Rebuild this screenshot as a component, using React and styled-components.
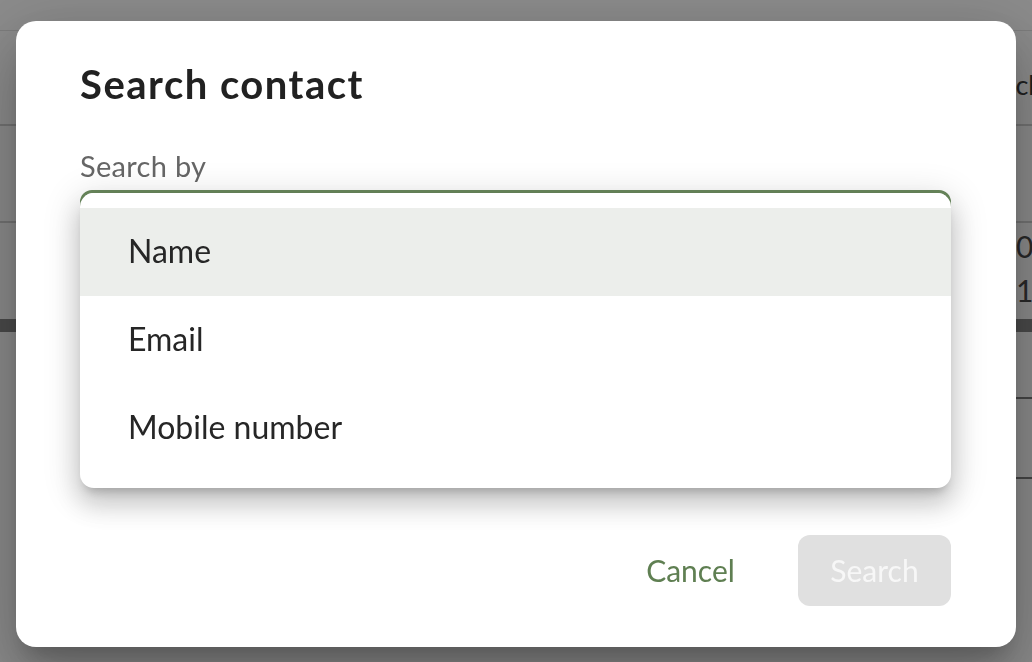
import React from "react";
import styled, { createGlobalStyle } from "styled-components";

const Global = createGlobalStyle`
  html, body { margin: 0; padding: 0; }
  body {
    width: 1032px;
    height: 662px;
    overflow: hidden;
    background: #ffffff;
    font-family: Lato, "Noto Sans", "Liberation Sans", sans-serif;
  }
`;

const Page = styled.div`
  width: 1032px;
  height: 662px;
  background: #fff;
  display: flex;
  flex-direction: column;
`;

const TopBar = styled.div`
  height: 30px;
  border-bottom: 1px solid #e4e4e4;
`;

const HeaderRow = styled.div`
  height: 95px;
  box-sizing: border-box;
  padding-top: 14px;
  border-bottom: 2px solid #d2d2d2;
  display: flex;
  align-items: center;
  justify-content: flex-end;
`;

const HeaderCell = styled.div`
  font-size: 27px;
  color: #3a3a3a;
  white-space: nowrap;
  margin-right: -10px;
`;

const Row = styled.div`
  height: ${(p) => p.$h}px;
  border-bottom: ${(p) => (p.$last ? "none" : "2px solid #d2d2d2")};
  display: flex;
  align-items: center;
  justify-content: flex-end;
`;

const StackCell = styled.div`
  display: flex;
  flex-direction: column;
  font-size: 30px;
  line-height: 44px;
  margin-top: -6px;
  color: #4a4a4a;
  margin-right: -30px;
  width: 46px;
`;

const DarkBar = styled.div`
  height: 13px;
  background: #888;
`;

const LowerRow = styled.div`
  height: ${(p) => p.$h}px;
  margin-left: 600px;
  border-bottom: 2px solid #7e7e7e;
`;

const Overlay = styled.div`
  position: fixed;
  inset: 0;
  background: rgba(0, 0, 0, 0.455);
  display: flex;
  justify-content: center;
  align-items: flex-start;
  padding-top: 21px;
  box-sizing: border-box;
`;

const Dialog = styled.div`
  position: relative;
  width: 1000px;
  height: 626px;
  box-sizing: border-box;
  background: #fff;
  border-radius: 20px;
  padding: 40px 65px 0 64px;
  display: flex;
  flex-direction: column;
  box-shadow: 0 16px 22px -10px rgba(0, 0, 0, 0.2),
    0 36px 56px 4px rgba(0, 0, 0, 0.16), 0 14px 68px 12px rgba(0, 0, 0, 0.14);
`;

const Title = styled.h2`
  margin: 0;
  font-size: 40px;
  line-height: 46px;
  letter-spacing: 1.5px;
  font-weight: 700;
  color: #212121;
`;

const Label = styled.label`
  display: block;
  margin-top: 43px;
  font-size: 29px;
  line-height: 32px;
  letter-spacing: 0.3px;
  color: #666;
`;

const Field = styled.div`
  position: relative;
  margin-top: 8px;
`;

const SelectBox = styled.div`
  height: 72px;
  box-sizing: border-box;
  border: 3px solid #6b8a5e;
  border-radius: 12px;
  background: #fff;
`;

const TextBox = styled.div`
  margin-top: 40px;
  height: 72px;
  box-sizing: border-box;
  border: 2px solid #c4c4c4;
  border-radius: 12px;
`;

const Menu = styled.ul`
  position: absolute;
  top: 3px;
  left: 0;
  right: 0;
  margin: 0;
  padding: 15px 0 16px;
  list-style: none;
  background: #fff;
  border-radius: 14px;
  box-shadow: 0 8px 10px -5px rgba(0, 0, 0, 0.2),
    0 16px 24px 2px rgba(0, 0, 0, 0.14), 0 6px 34px 6px rgba(0, 0, 0, 0.12);
  z-index: 2;
`;

const Item = styled.li`
  height: 88px;
  box-sizing: border-box;
  padding-bottom: 4px;
  display: flex;
  align-items: center;
  padding-left: 48px;
  font-size: 32px;
  color: #262626;
  background: ${(p) => (p.$active ? "#eceeeb" : "transparent")};
`;

const Actions = styled.div`
  margin-top: auto;
  margin-bottom: 41px;
  display: flex;
  justify-content: flex-end;
  gap: 31px;
`;

const Button = styled.button`
  width: 153px;
  height: 71px;
  border: none;
  border-radius: 12px;
  font-family: inherit;
  font-size: 30px;
  padding-bottom: 2px;
  cursor: pointer;
  background: ${(p) => (p.$variant === "disabled" ? "#e0e0e0" : "transparent")};
  color: ${(p) => (p.$variant === "disabled" ? "#f7f7f7" : "#5f7f52")};
`;

export default function App() {
  return (
    <>
      <Global />
      <Page>
        <TopBar />
        <HeaderRow>
          <HeaderCell>Back</HeaderCell>
        </HeaderRow>
        <Row $h={95} />
        <Row $h={96} $last>
          <StackCell>
            <span>0</span>
            <span>1</span>
          </StackCell>
        </Row>
        <DarkBar />
        <LowerRow $h={65} />
        <LowerRow $h={78} />
      </Page>
      <Overlay>
        <Dialog role="dialog" aria-labelledby="dlg-title">
          <Title id="dlg-title">Search contact</Title>
          <Label>Search by</Label>
          <Field>
            <SelectBox />
            <Menu role="listbox">
              <Item $active>Name</Item>
              <Item>Email</Item>
              <Item>Mobile number</Item>
            </Menu>
            <TextBox />
          </Field>
          <Actions>
            <Button>Cancel</Button>
            <Button $variant="disabled" disabled>
              Search
            </Button>
          </Actions>
        </Dialog>
      </Overlay>
    </>
  );
}
